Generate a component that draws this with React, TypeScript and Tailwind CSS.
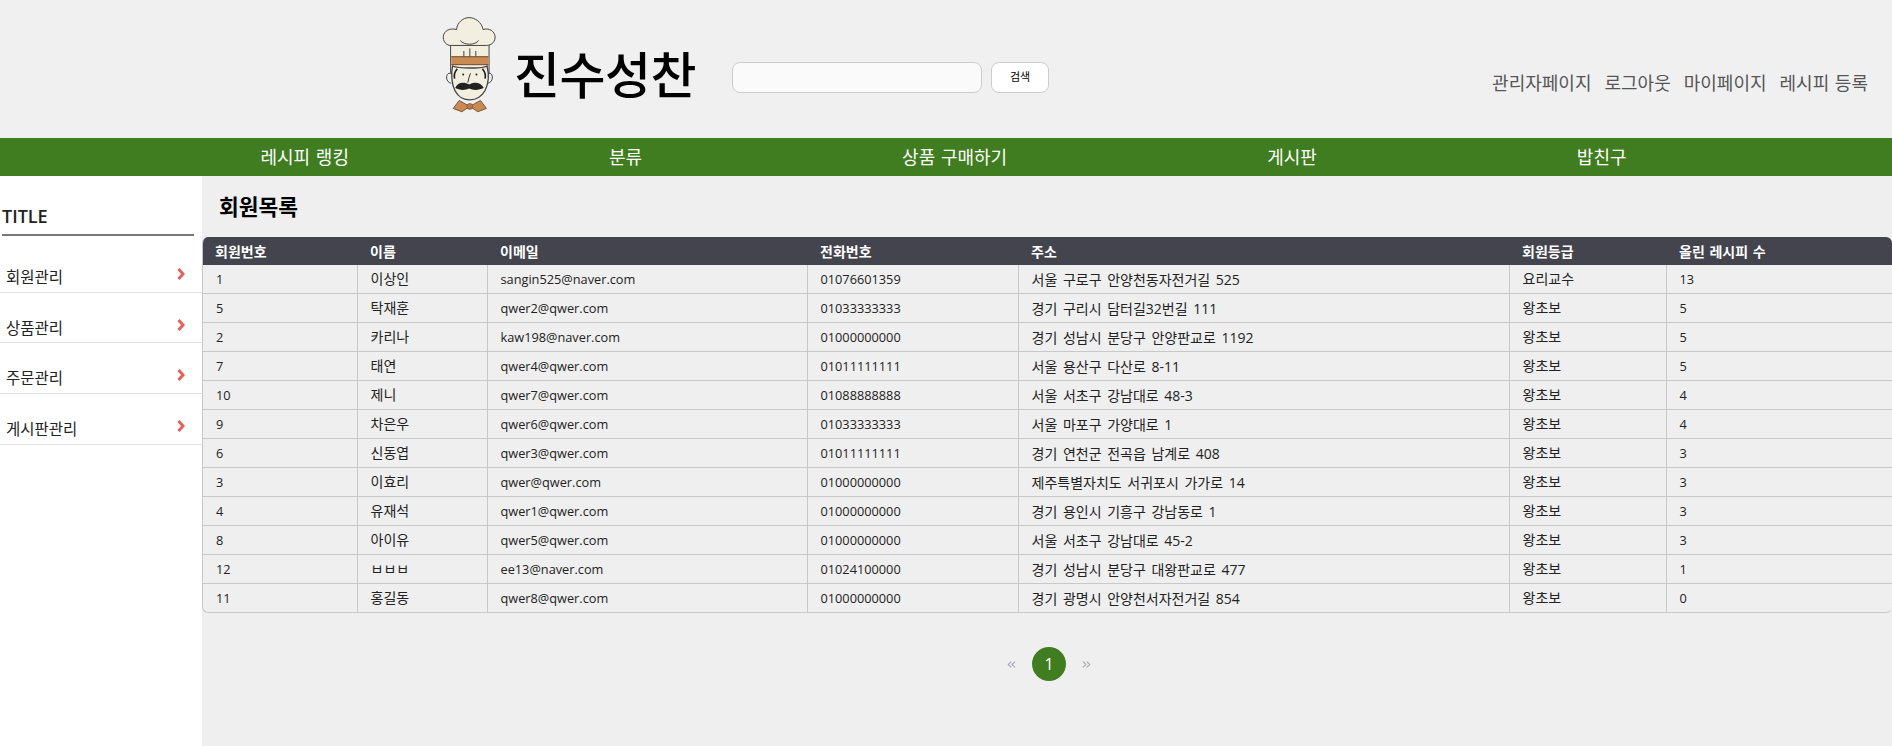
import { ChevronsLeft, ChevronsRight } from "lucide-react";

const FONT = "font-['Open_Sans','Noto_Sans_CJK_KR',sans-serif]";

const TOP_LINKS = ["관리자페이지", "로그아웃", "마이페이지", "레시피 등록"];
const NAV = ["레시피 랭킹", "분류", "상품 구매하기", "게시판", "밥친구"];

const SIDE_ITEMS = [
  { label: "회원관리", cls: "h-[49px] pt-[22px]" },
  { label: "상품관리", cls: "h-[50px] pt-[24px]" },
  { label: "주문관리", cls: "h-[51px] pt-[24px]" },
  { label: "게시판관리", cls: "h-[51px] pt-[24px]" },
];

const HEADERS = ["회원번호", "이름", "이메일", "전화번호", "주소", "회원등급", "올린 레시피 수"];

const MEMBERS = [
  ["1", "이상인", "sangin525@naver.com", "01076601359", "서울 구로구 안양천동자전거길 525", "요리교수", "13"],
  ["5", "탁재훈", "qwer2@qwer.com", "01033333333", "경기 구리시 담터길32번길 111", "왕초보", "5"],
  ["2", "카리나", "kaw198@naver.com", "01000000000", "경기 성남시 분당구 안양판교로 1192", "왕초보", "5"],
  ["7", "태연", "qwer4@qwer.com", "01011111111", "서울 용산구 다산로 8-11", "왕초보", "5"],
  ["10", "제니", "qwer7@qwer.com", "01088888888", "서울 서초구 강남대로 48-3", "왕초보", "4"],
  ["9", "차은우", "qwer6@qwer.com", "01033333333", "서울 마포구 가양대로 1", "왕초보", "4"],
  ["6", "신동엽", "qwer3@qwer.com", "01011111111", "경기 연천군 전곡읍 남계로 408", "왕초보", "3"],
  ["3", "이효리", "qwer@qwer.com", "01000000000", "제주특별자치도 서귀포시 가가로 14", "왕초보", "3"],
  ["4", "유재석", "qwer1@qwer.com", "01000000000", "경기 용인시 기흥구 강남동로 1", "왕초보", "3"],
  ["8", "아이유", "qwer5@qwer.com", "01000000000", "서울 서초구 강남대로 45-2", "왕초보", "3"],
  ["12", "ㅂㅂㅂ", "ee13@naver.com", "01024100000", "경기 성남시 분당구 대왕판교로 477", "왕초보", "1"],
  ["11", "홍길동", "qwer8@qwer.com", "01000000000", "경기 광명시 안양천서자전거길 854", "왕초보", "0"],
];

// columns holding only latin text and digits run a bit smaller and sit lower than the hangul ones
const CELL_TEXT = [
  "pt-[2px] text-[12.75px]",
  "text-[14px]",
  "pt-[2px] text-[12.75px]",
  "pt-[2px] text-[12.75px]",
  "pt-[1px] text-[14px] [word-spacing:2px]",
  "text-[14px]",
  "pt-[2px] text-[12.75px]",
];

function ChefLogo() {
  return (
    <svg viewBox="30 15 175 300" className="h-[100px] w-[58px] shrink-0">
      <rect x="62" y="100" width="116" height="90" fill="#f3efe0" stroke="#444" strokeWidth="3" />
      <rect x="64" y="140" width="112" height="24" fill="#c98a54" />
      <path d="M64 140h112M64 164h112" stroke="#6b4a30" strokeWidth="3" />
      <path d="M102 138v-14M120 138v-22M138 138v-14" stroke="#444" strokeWidth="3" strokeLinecap="round" />
      <path
        d="M66 106c-18 2-28-14-26-28 2-15 18-26 40-20 2-22 20-36 38-36s38 14 42 36c20-6 34 6 36 20 2 16-10 28-26 28z"
        fill="#f3efe0"
        stroke="#444"
        strokeWidth="3"
      />
      <path d="M92 92c10 14 44 14 54 0" fill="none" stroke="#444" strokeWidth="3" strokeLinecap="round" />
      <path d="M60 190c-14-2-14 28 4 30M178 190c14-2 14 28-4 30" fill="none" stroke="#444" strokeWidth="3" />
      <path
        d="M68 168c-6 24-2 58 8 76 8 14 18 26 44 26s38-14 46-28c10-20 12-50 6-74-16 8-30 6-52 6s-38 0-52-6z"
        fill="#f3efe0"
        stroke="#444"
        strokeWidth="4"
      />
      <path d="M82 176c-8 10-10 22-8 30M158 176c8 10 10 22 8 30" fill="none" stroke="#222" strokeWidth="5" />
      <circle cx="100" cy="194" r="3" fill="#222" />
      <circle cx="140" cy="194" r="3" fill="#222" />
      <path d="M122 190c-4 10-6 18-8 28" fill="none" stroke="#333" strokeWidth="3" />
      <path d="M76 234c6-16 26-20 42-10 16-10 36-6 44 10-14 8-32 8-44 2-12 6-30 6-42-2z" fill="#222" />
      <path d="M88 272l32 18 32-18 18 24-26 10-24-16-24 16-26-10z" fill="#c98a54" stroke="#7a5434" strokeWidth="3" />
      <circle cx="120" cy="290" r="9" fill="#b97a45" stroke="#7a5434" strokeWidth="2" />
    </svg>
  );
}

function Header() {
  return (
    <header className="flex h-[138px] items-start bg-[#f0f0f0]">
      <div className="ml-[440px] mt-[15px] flex items-start">
        <ChefLogo />
        <span className="ml-[16px] mt-[30px] whitespace-nowrap text-[50px] leading-[60px] font-medium tracking-[-0.5px] text-black">
          진수성찬
        </span>
      </div>
      <form className="ml-[36px] mt-[62px] flex gap-[9px]">
        <input
          type="text"
          className="h-[31px] w-[250px] rounded-lg border border-[#ccc] bg-[#fafafa] px-2 text-sm"
        />
        <button
          type="button"
          className="h-[31px] w-[58px] rounded-lg border border-[#ccc] bg-white text-[11px] text-black"
        >
          검색
        </button>
      </form>
      <nav className="ml-auto mr-[24px] mt-[71px] flex gap-[13px] text-[18px] leading-6 text-[#555] [word-spacing:1px]">
        {TOP_LINKS.map((link) => (
          <a key={link} href="#">
            {link}
          </a>
        ))}
      </nav>
    </header>
  );
}

function Sidebar() {
  return (
    <aside className="w-[202px] shrink-0 bg-white">
      <div className="mx-[2px] mt-[27px] w-[192px] border-b-2 border-[#777] pb-[5px] text-[18px] leading-[26px] font-semibold text-[#222]">
        TITLE
      </div>
      <ul className="mt-[8px]">
        {SIDE_ITEMS.map((item) => (
          <li
            key={item.label}
            className={`flex items-start justify-between border-b border-[#e2e2e2] pl-[6px] pr-[17px] text-[15.5px] leading-[22px] text-[#222] ${item.cls}`}
          >
            <span>{item.label}</span>
            <svg viewBox="0 0 8 12" className="mt-[2px] h-[12px] w-[8px]">
              <path d="M1.5 1l4.5 5-4.5 5" fill="none" stroke="#e0635c" strokeWidth="3" />
            </svg>
          </li>
        ))}
      </ul>
    </aside>
  );
}

function MemberTable() {
  return (
    <div className="mt-[16px] overflow-hidden rounded-md border-b border-l border-[#c8c8c8]">
      <table className="w-full table-fixed border-collapse">
        <colgroup>
          <col className="w-[154px]" />
          <col className="w-[130px]" />
          <col className="w-[320px]" />
          <col className="w-[211px]" />
          <col className="w-[491px]" />
          <col className="w-[157px]" />
          <col />
        </colgroup>
        <thead>
          <tr className="h-[28px] bg-[#44444e] text-white">
            {HEADERS.map((h) => (
              <th key={h} className="px-[13px] text-left text-[14px] font-bold [word-spacing:1px] first:px-[12px]">
                {h}
              </th>
            ))}
          </tr>
        </thead>
        <tbody className="text-[#222]">
          {MEMBERS.map((row, i) => (
            <tr
              key={row[0]}
              className={`h-[29px] first:h-[28px] ${i < MEMBERS.length - 1 ? "border-b border-[#c8c8c8]" : ""}`}
            >
              {row.map((cell, j) => (
                <td
                  key={j}
                  className={`px-[13px] py-0 ${CELL_TEXT[j]} ${j > 0 ? "border-l border-[#c8c8c8]" : ""}`}
                >
                  {cell}
                </td>
              ))}
            </tr>
          ))}
        </tbody>
      </table>
    </div>
  );
}

function Pagination() {
  return (
    <div className="ml-[4px] mt-[34px] flex items-center justify-center gap-[14px] text-[#a9a9b5]">
      <ChevronsLeft size={13} strokeWidth={2} />
      <span className="flex h-[34px] w-[34px] items-center justify-center rounded-full bg-[#3f7d20] text-[16px] text-white">
        1
      </span>
      <ChevronsRight size={13} strokeWidth={2} />
    </div>
  );
}

export default function App() {
  return (
    <div className={`${FONT} flex min-h-screen flex-col bg-[#efefef]`}>
      <Header />
      <nav className="flex h-[38px] items-center justify-center gap-[260px] bg-[#3f7d20] pr-[5px] text-[18px] text-white [word-spacing:1px]">
        {NAV.map((item) => (
          <a key={item} href="#" className="whitespace-nowrap">
            {item}
          </a>
        ))}
      </nav>
      <div className="flex flex-1">
        <Sidebar />
        <main className="min-w-0 flex-1">
          <h1 className="ml-[17px] mt-[17px] text-[21.5px] leading-[28px] font-semibold text-black">회원목록</h1>
          <MemberTable />
          <Pagination />
        </main>
      </div>
    </div>
  );
}
